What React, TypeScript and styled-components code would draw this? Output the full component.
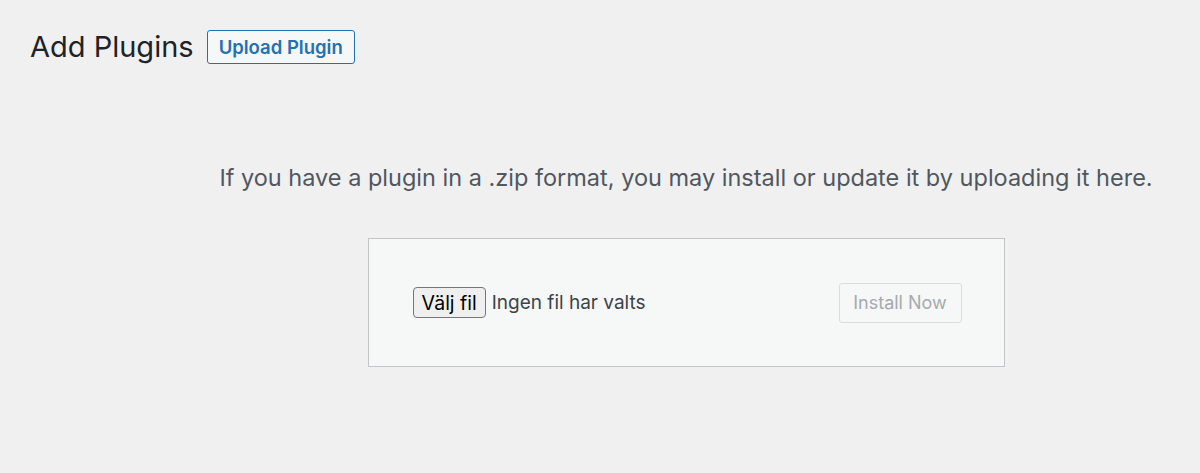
import styled, { createGlobalStyle } from 'styled-components';

const GlobalStyle = createGlobalStyle`
  html, body {
    margin: 0;
    padding: 0;
    background: #f0f0f1;
  }
  body {
    font-family: Inter, "Liberation Sans", Arial, sans-serif;
    color: #1d2327;
  }
`;

const Page = styled.div`
  width: 1200px;
  height: 473px;
  overflow: hidden;
  background: #f0f0f1;
`;

const Header = styled.header`
  display: flex;
  align-items: center;
  gap: 13px;
  padding: 29px 0 0 30px;
`;

const Title = styled.h1`
  margin: 0;
  font-size: 29px;
  font-weight: 400;
  line-height: 36px;
  color: #1d2327;
`;

const OutlineButton = styled.button`
  box-sizing: border-box;
  height: 34px;
  padding: 0 11px;
  font-family: inherit;
  font-size: 18.5px;
  font-weight: 600;
  color: #2271b1;
  background: #f6f7f7;
  border: 1px solid #2271b1;
  border-radius: 3px;
`;

const UploadSection = styled.section`
  display: flex;
  flex-direction: column;
  align-items: center;
  padding-left: 172px;
  margin-top: 97px;
`;

const Help = styled.p`
  margin: 0 0 44px;
  font-size: 23.5px;
  line-height: 32px;
  color: #50575e;
`;

const UploadForm = styled.form`
  box-sizing: border-box;
  width: 637px;
  height: 129px;
  display: flex;
  align-items: center;
  justify-content: space-between;
  padding: 0 42px 0 44px;
  background: #f6f7f7;
  border: 1px solid #c3c4c7;
`;

const FilePicker = styled.div`
  display: flex;
  align-items: center;
  gap: 6px;
`;

const NativeButton = styled.span`
  box-sizing: border-box;
  height: 31px;
  padding: 0 8px;
  display: flex;
  align-items: center;
  font-size: 19.5px;
  color: #000;
  background: #efefef;
  border: 1px solid #767676;
  border-radius: 4px;
`;

const FileStatus = styled.span`
  font-size: 19px;
  color: #3c434a;
`;

const DisabledButton = styled.button`
  box-sizing: border-box;
  height: 40px;
  width: 123px;
  font-family: inherit;
  font-size: 18px;
  color: #a7aaad;
  background: #f6f7f7;
  border: 1px solid #dcdcde;
  border-radius: 3px;
`;

export default function App() {
  return (
    <Page>
      <GlobalStyle />
      <Header>
        <Title>Add Plugins</Title>
        <OutlineButton type="button">Upload Plugin</OutlineButton>
      </Header>
      <UploadSection>
        <Help>If you have a plugin in a .zip format, you may install or update it by uploading it here.</Help>
        <UploadForm>
          <FilePicker>
            <NativeButton>Välj fil</NativeButton>
            <FileStatus>Ingen fil har valts</FileStatus>
          </FilePicker>
          <DisabledButton type="button" disabled>Install Now</DisabledButton>
        </UploadForm>
      </UploadSection>
    </Page>
  );
}
